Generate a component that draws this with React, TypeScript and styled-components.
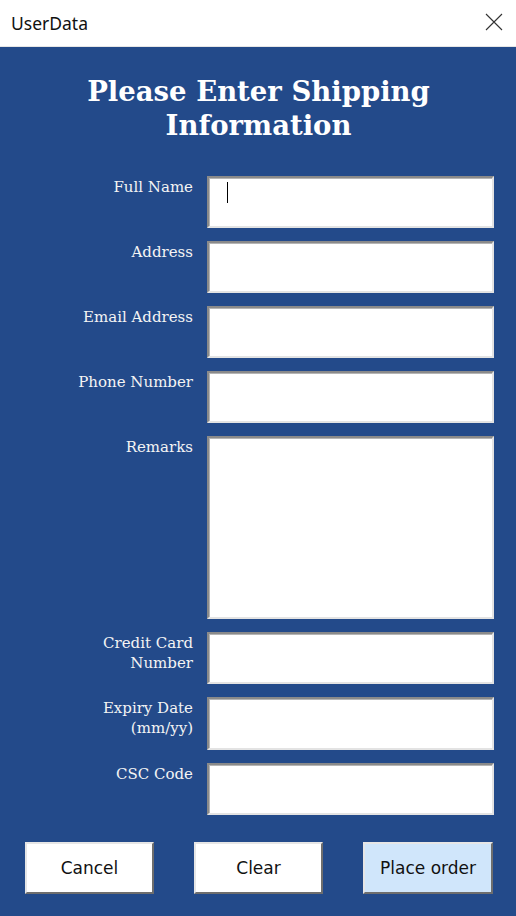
import React from "react";
import styled, { createGlobalStyle } from "styled-components";

const Global = createGlobalStyle`
  html, body { margin: 0; padding: 0; background: #234a8a; }
  body { width: 516px; height: 916px; overflow: hidden; }
`;

const Window = styled.div`
  width: 516px;
  height: 916px;
  display: flex;
  flex-direction: column;
  background: #234a8a;
`;

const TitleBar = styled.div`
  height: 46px;
  flex: none;
  background: #ffffff;
  border-bottom: 1px solid #e6e6e6;
  display: flex;
  align-items: center;
  justify-content: space-between;
  padding: 0 13px 0 11px;
  font-family: "Noto Sans", "Open Sans", sans-serif;
  font-size: 17.5px;
  color: #111;
`;

const CloseButton = styled.div`
  width: 18px;
  height: 18px;
  display: flex;
  margin-top: -2px;
`;

const Body = styled.div`
  display: flex;
  flex-direction: column;
  padding-top: 27px;
`;

const Heading = styled.h1`
  margin: 0 0 34px 0;
  text-align: center;
  font-family: "DejaVu Serif", serif;
  font-weight: bold;
  font-size: 27.5px;
  line-height: 34px;
  color: #ffffff;
  padding-left: 1px;
`;

const Form = styled.div`
  display: grid;
  grid-template-columns: 193px 287px;
  column-gap: 14px;
  row-gap: 13px;
`;

const Label = styled.div`
  text-align: right;
  font-family: "DejaVu Serif", serif;
  font-size: 15px;
  line-height: 20px;
  color: #f4f4f4;
  padding-top: 1px;
`;

const Field = styled.div<{ $h: number }>`
  box-sizing: border-box;
  height: ${(p) => p.$h}px;
  background: #ffffff;
  border-top: 2px solid #8a8a8a;
  border-left: 2px solid #8a8a8a;
  border-bottom: 2px solid #e3e3e3;
  border-right: 2px solid #e3e3e3;
  box-shadow: inset 1px 1px 0 #b5b5b5;
  padding: 4px 0 0 18px;
`;

const Caret = styled.div`
  width: 1px;
  height: 21px;
  background: #000;
`;

const Buttons = styled.div`
  display: flex;
  gap: 40px;
  padding: 27px 0 0 25px;
`;

const Button = styled.button<{ $primary?: boolean }>`
  box-sizing: border-box;
  width: ${(p) => (p.$primary ? 130 : 129)}px;
  height: 52px;
  background: ${(p) => (p.$primary ? "#d0e6fb" : "#ffffff")};
  border-top: 2px solid #e6e6e6;
  border-left: 2px solid #e6e6e6;
  border-bottom: 2px solid #6e6e6e;
  border-right: 2px solid #6e6e6e;
  font-family: "DejaVu Sans", sans-serif;
  font-size: 17px;
  color: #111;
  padding: 0;
  cursor: pointer;
`;

const fields: { label: string[]; h: number; caret?: boolean }[] = [
  { label: ["Full Name"], h: 52, caret: true },
  { label: ["Address"], h: 52 },
  { label: ["Email Address"], h: 52 },
  { label: ["Phone Number"], h: 52 },
  { label: ["Remarks"], h: 183 },
  { label: ["Credit Card", "Number"], h: 52 },
  { label: ["Expiry Date", "(mm/yy)"], h: 53 },
  { label: ["CSC Code"], h: 52 },
];

export default function App() {
  return (
    <Window>
      <Global />
      <TitleBar>
        <span>UserData</span>
        <CloseButton>
          <svg width="18" height="18" viewBox="0 0 18 18">
            <path d="M1 1 L17 17 M17 1 L1 17" stroke="#333" strokeWidth="1.1" fill="none" />
          </svg>
        </CloseButton>
      </TitleBar>
      <Body>
        <Heading>
          Please Enter Shipping
          <br />
          Information
        </Heading>
        <Form>
          {fields.map((f) => (
            <React.Fragment key={f.label.join(" ")}>
              <Label>
                {f.label.map((l) => (
                  <div key={l}>{l}</div>
                ))}
              </Label>
              <Field $h={f.h}>{f.caret && <Caret />}</Field>
            </React.Fragment>
          ))}
        </Form>
        <Buttons>
          <Button>Cancel</Button>
          <Button>Clear</Button>
          <Button $primary>Place order</Button>
        </Buttons>
      </Body>
    </Window>
  );
}
